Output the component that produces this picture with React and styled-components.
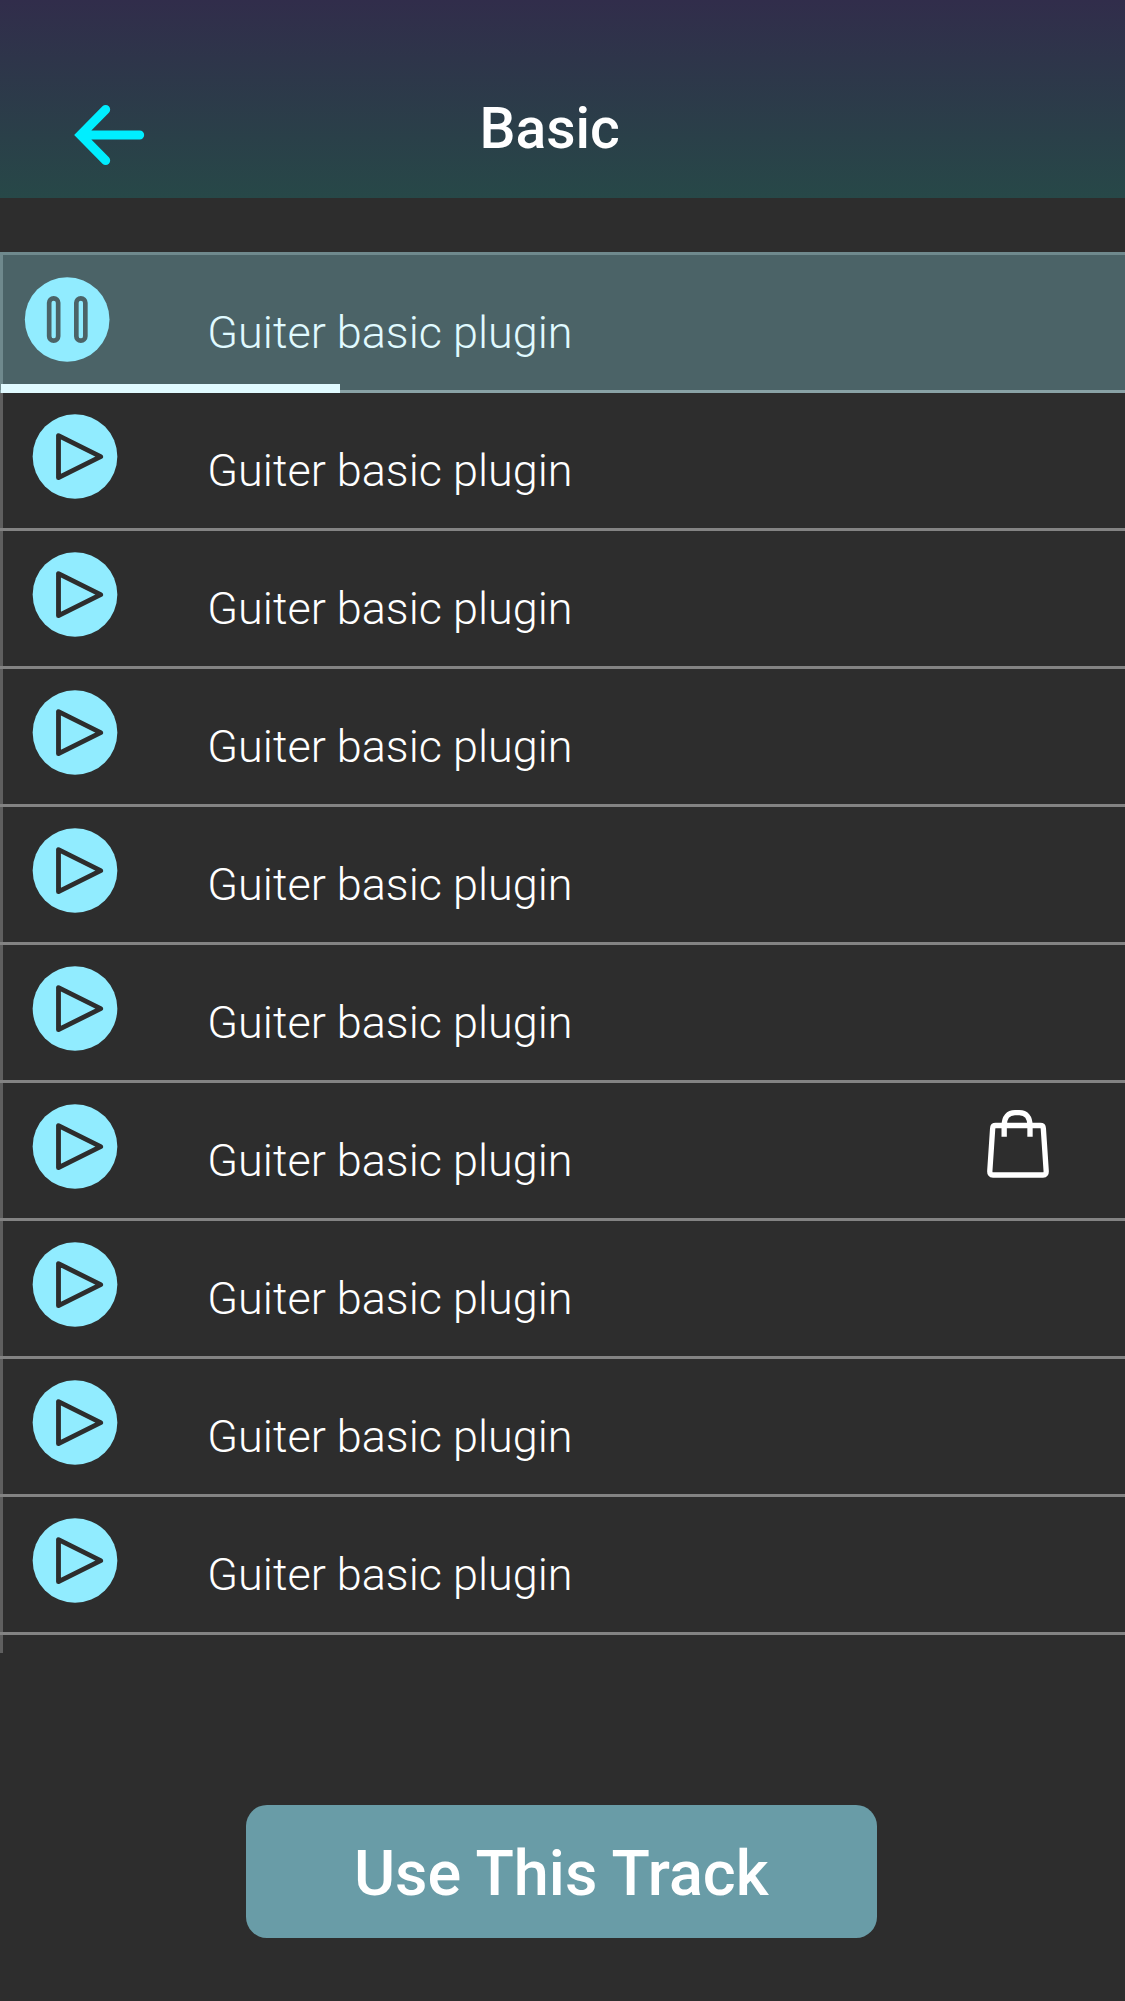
import React from "react";
import styled, { createGlobalStyle } from "styled-components";

const GlobalStyle = createGlobalStyle`
  *, *::before, *::after { box-sizing: border-box; }
  body { margin: 0; background: #2d2d2d; }
`;

const Screen = styled.main`
  display: flex;
  flex-direction: column;
  width: 1125px;
  height: 2001px;
  overflow: hidden;
  background: #2d2d2d;
  color: #fff;
  font-family: Roboto, "Liberation Sans", sans-serif;
`;

const Header = styled.header`
  display: grid;
  grid-template-columns: 479.5px 1fr;
  align-items: start;
  height: 198px;
  background: linear-gradient(180deg, #312d4b 0%, #274848 100%);
`;

const BackButton = styled.button`
  display: flex;
  justify-self: start;
  margin: 104px 0 0 74px;
  padding: 0;
  border: 0;
  background: none;
`;

const Title = styled.h1`
  margin: 95px 0 0;
  font-size: 57px;
  font-weight: 500;
  line-height: 67px;
`;

const TrackList = styled.ul`
  display: flex;
  flex-direction: column;
  height: 1401px;
  margin: 54px 0 0;
  padding: 0;
  list-style: none;
  background: linear-gradient(#5f5f5f, #5f5f5f) 0 0 / 3px 100% no-repeat;
`;

const Row = styled.li`
  position: relative;
  display: flex;
  align-items: flex-start;
  flex: none;
  height: ${(p) => (p.$active ? 141 : 138)}px;
  padding-left: ${(p) => (p.$active ? 24 : 32)}px;
  padding-right: 76px;
  border-bottom: 3px solid ${(p) => (p.$active ? "#89a2a6" : "#838383")};
  background: ${(p) => (p.$active ? "#4b6367" : "transparent")};
  color: ${(p) => (p.$active ? "#e0faff" : "#fff")};
  ${(p) => p.$active && "box-shadow: inset 3px 3px 0 #6f898d;"}
`;

const PlayButton = styled.button`
  display: flex;
  width: 86px;
  margin-top: ${(p) => (p.$active ? 24 : 20)}px;
  padding: 0;
  border: 0;
  background: none;
`;

const Name = styled.span`
  flex: 1;
  margin-left: ${(p) => (p.$active ? 97.3 : 89.3)}px;
  padding-top: ${(p) => (p.$active ? 54 : 51)}px;
  font-size: 45px;
  font-weight: 300;
  line-height: 53px;
`;

const BuyButton = styled.button`
  display: flex;
  margin-top: 27px;
  padding: 0;
  border: 0;
  background: none;
`;

const Progress = styled.div`
  position: absolute;
  left: 1px;
  bottom: -3px;
  height: 9px;
  background: #e0faff;
`;

const Footer = styled.footer`
  display: flex;
  padding: 152px 0 0 246px;
`;

const UseButton = styled.button`
  width: 630.5px;
  height: 133px;
  padding: 4px 0 0;
  border: 0;
  border-radius: 21px;
  background: #699ca7;
  color: #fff;
  font-family: inherit;
  font-size: 63px;
  font-weight: 500;
  line-height: 74px;
`;

const BackIcon = () => (
  <svg width="72" height="62" viewBox="222 132 216 186" fill="none" stroke="#00eeff" strokeWidth="27" strokeLinecap="round">
    <path d="M317 148.500L241.500 225L317 301.500M246 225H419" />
  </svg>
);

const PlayIcon = () => (
  <svg width="86" height="87" viewBox="-2 -3 258 261">
    <circle cx="127" cy="127.500" r="127" fill="#91ecff" />
    <path d="M77.500 65V191L204 128Z" fill="none" stroke="#2d2d2d" strokeWidth="14.500" strokeLinejoin="round" />
  </svg>
);

const PauseIcon = () => (
  <svg width="86" height="87" viewBox="-3 -3 258 261">
    <circle cx="126.500" cy="127.500" r="127" fill="#91ecff" />
    <g fill="none" stroke="#4b6367" strokeWidth="14">
      <rect x="72.500" y="64" width="27" height="127" rx="13.500" />
      <rect x="154" y="64" width="27" height="127" rx="13.500" />
    </g>
  </svg>
);

const BagIcon = () => (
  <svg width="62" height="68" viewBox="81 90 186 204" fill="none" stroke="#fff" strokeWidth="16">
    <path d="M107 136.500H241Q249.500 136.500 250 145L258.500 272Q259.500 285 249 285H99Q88.500 285 89.500 272L98 145Q98.500 136.500 107 136.500Z" />
    <path d="M132.500 170.500V137C132.500 111 145 98 165 98H178C198 98 210 111 210 137V170.500" />
  </svg>
);

const tracks = Array.from({ length: 10 }, (_, i) => ({
  id: i,
  name: "Guiter basic plugin",
  active: i === 0,
  locked: i === 6,
}));

export default function App() {
  return (
    <Screen>
      <GlobalStyle />
      <Header>
        <BackButton aria-label="Back"><BackIcon /></BackButton>
        <Title>Basic</Title>
      </Header>
      <TrackList>
        {tracks.map((t) => (
          <Row key={t.id} $active={t.active}>
            <PlayButton $active={t.active} aria-label={t.active ? "Pause" : "Play"}>
              {t.active ? <PauseIcon /> : <PlayIcon />}
            </PlayButton>
            <Name $active={t.active}>{t.name}</Name>
            {t.locked && <BuyButton aria-label="Buy"><BagIcon /></BuyButton>}
            {t.active && <Progress style={{ width: "339px" }} />}
          </Row>
        ))}
      </TrackList>
      <Footer>
        <UseButton>Use This Track</UseButton>
      </Footer>
    </Screen>
  );
}
